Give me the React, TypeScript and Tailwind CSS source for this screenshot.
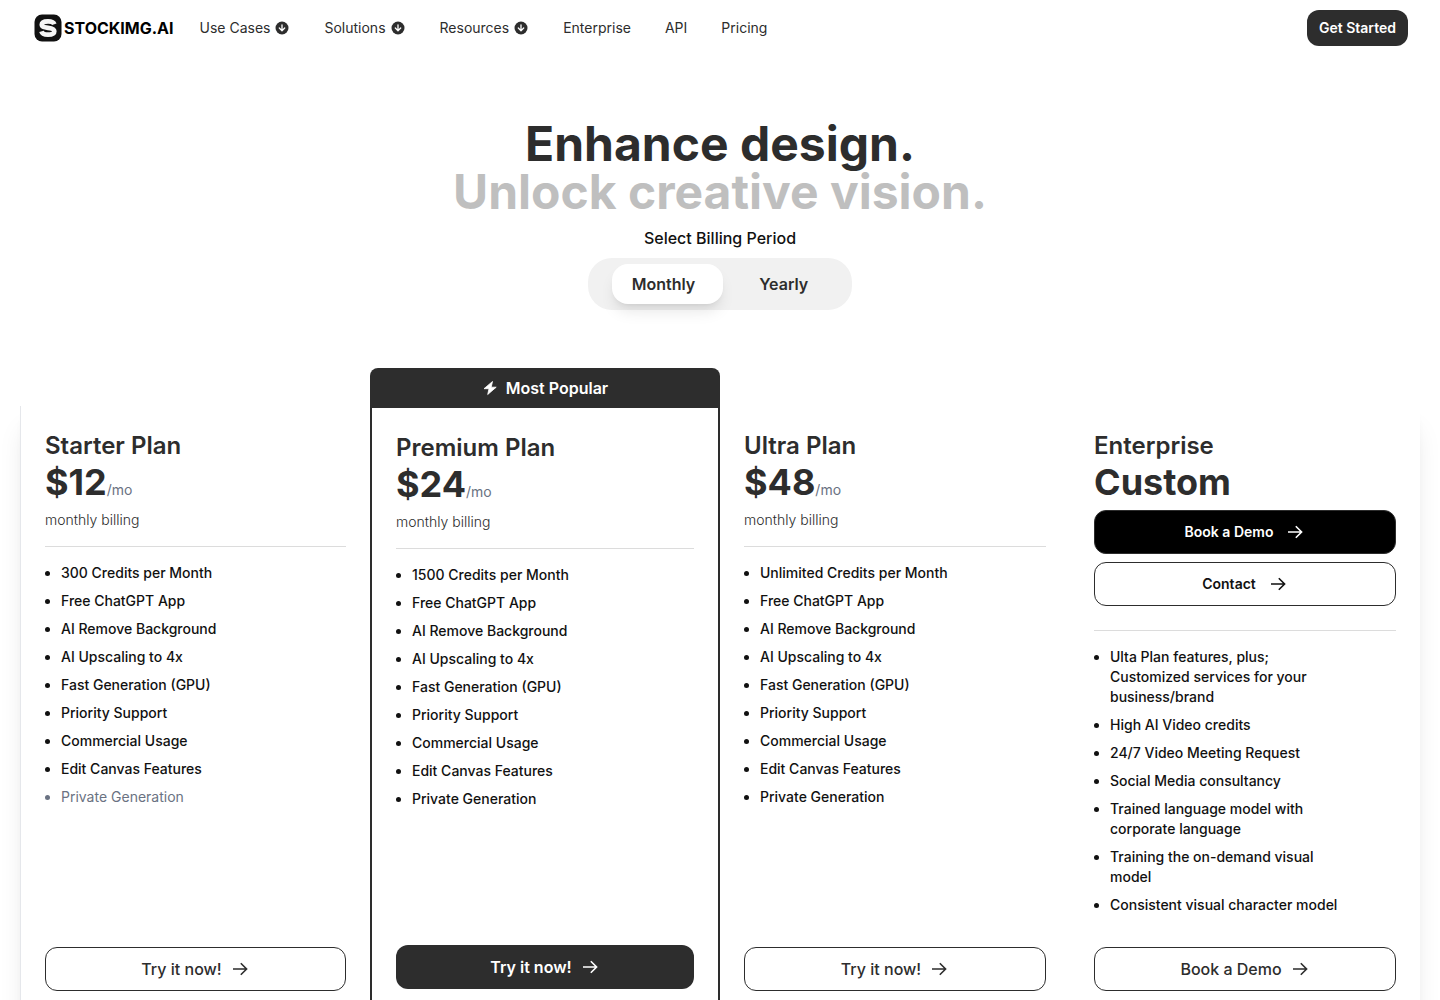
import { useState } from "react";

type Feature = {
  text: string;
  disabled?: boolean;
};

type Plan = {
  name: string;
  monthly: number;
  yearly: number;
  features: Feature[];
  popular?: boolean;
};

const navLinks = [
  { label: "Use Cases", hasMenu: true },
  { label: "Solutions", hasMenu: true },
  { label: "Resources", hasMenu: true },
  { label: "Enterprise", hasMenu: false },
  { label: "API", hasMenu: false },
  { label: "Pricing", hasMenu: false },
];

const commonFeatures: Feature[] = [
  { text: "Free ChatGPT App" },
  { text: "AI Remove Background" },
  { text: "AI Upscaling to 4x" },
  { text: "Fast Generation (GPU)" },
  { text: "Priority Support" },
  { text: "Commercial Usage" },
  { text: "Edit Canvas Features" },
];

const plans: Plan[] = [
  {
    name: "Starter Plan",
    monthly: 12,
    yearly: 9,
    features: [
      { text: "300 Credits per Month" },
      ...commonFeatures,
      { text: "Private Generation", disabled: true },
    ],
  },
  {
    name: "Premium Plan",
    monthly: 24,
    yearly: 19,
    popular: true,
    features: [
      { text: "1500 Credits per Month" },
      ...commonFeatures,
      { text: "Private Generation" },
    ],
  },
  {
    name: "Ultra Plan",
    monthly: 48,
    yearly: 39,
    features: [
      { text: "Unlimited Credits per Month" },
      ...commonFeatures,
      { text: "Private Generation" },
    ],
  },
];

const enterpriseFeatures: Feature[] = [
  { text: "Ulta Plan features, plus; Customized services for your business/brand" },
  { text: "High AI Video credits" },
  { text: "24/7 Video Meeting Request" },
  { text: "Social Media consultancy" },
  { text: "Trained language model with corporate language" },
  { text: "Training the on-demand visual model" },
  { text: "Consistent visual character model" },
];

const ArrowRight = () => (
  <svg
    viewBox="0 0 20 20"
    className="h-5 w-5"
    fill="none"
    stroke="currentColor"
    strokeWidth="1.6"
    aria-hidden="true"
  >
    <path d="M3 10h13.500M10.800 4.200 16.600 10l-5.800 5.800" />
  </svg>
);

const ArrowCircleDown = () => (
  <svg viewBox="0 0 16 16" className="h-4 w-4" aria-hidden="true">
    <circle cx="8" cy="8" r="6.500" fill="#2d2d2d" />
    <path
      d="M8 4.800v5.600M5.300 8 8 10.700 10.700 8"
      fill="none"
      stroke="#fff"
      strokeWidth="1.3"
      strokeLinecap="round"
      strokeLinejoin="round"
    />
  </svg>
);

const Bolt = () => (
  <svg viewBox="0 0 16 16" className="h-4 w-4" aria-hidden="true">
    <path
      d="M10.500 1.500 2 8.700h5L5.700 14.500 14.200 7.200h-5z"
      fill="currentColor"
      stroke="currentColor"
      strokeWidth="0.8"
      strokeLinejoin="round"
    />
  </svg>
);

const Logo = () => (
  <a href="#" className="flex items-center gap-0.5 text-black">
    <svg viewBox="0 0 28 28" className="h-7 w-7" aria-hidden="true">
      <rect x="0.5" y="0.5" width="27" height="27" rx="7.5" fill="#111" />
      <path
        d="M20.300 10.300C19.600 8.100 17 7.300 14 7.300c-3.700 0-6.200 1.200-6.200 3.300 0 2.300 2.400 2.700 6.200 3.200 4 .5 6.300 1.100 6.300 3.500 0 2.200-2.600 3.400-6.300 3.400-3.200 0-5.900-.900-6.500-3.300"
        fill="none"
        stroke="#f5f5f5"
        strokeWidth="4.700"
      />
    </svg>
    <span className="text-base leading-7 font-bold">STOCKIMG.AI</span>
  </a>
);

const Navbar = () => (
  <header className="flex h-14 items-center justify-between pr-8 pl-[34px]">
    <div className="flex items-center gap-[26px]">
      <Logo />
      <nav className="flex items-center gap-[34px] text-sm text-[#2d2d2d]">
        {navLinks.map((link) => (
          <a key={link.label} href="#" className="flex items-center gap-1">
            {link.label}
            {link.hasMenu && <ArrowCircleDown />}
          </a>
        ))}
      </nav>
    </div>
    <button className="h-9 rounded-xl bg-[#2d2d2d] px-3 text-sm font-semibold text-white">
      Get Started
    </button>
  </header>
);

const FeatureList = ({ features }: { features: Feature[] }) => (
  <ul className="flex max-w-[256px] list-disc flex-col gap-2 pl-4 text-sm font-medium text-[#111]">
    {features.map((feature) => (
      <li
        key={feature.text}
        className={feature.disabled ? "font-normal text-gray-500" : ""}
      >
        {feature.text}
      </li>
    ))}
  </ul>
);

const PlanCard = ({ plan, yearly }: { plan: Plan; yearly: boolean }) => (
  <article
    className={
      plan.popular
        ? "flex flex-col border-2 border-[#2d2d2d] p-6"
        : "flex flex-col p-6 first:border-l first:border-gray-200"
    }
  >
    <h2 className="text-2xl font-semibold text-[#2d2d2d]">{plan.name}</h2>
    <p className="text-4xl font-bold text-[#2d2d2d]">
      ${yearly ? plan.yearly : plan.monthly}
      <span className="text-sm font-normal text-gray-500">/mo</span>
    </p>
    <p className="mt-2 text-sm font-light text-[#2d2d2d]">
      {yearly ? "yearly billing" : "monthly billing"}
    </p>
    <hr className="my-4 border-[#dcdcdc]" />
    <FeatureList features={plan.features} />
    <button
      className={
        plan.popular
          ? "mt-auto flex h-11 items-center justify-center gap-2 rounded-xl bg-[#2d2d2d] font-semibold text-white"
          : "mt-auto flex h-11 items-center justify-center gap-2 rounded-xl border border-[#2d2d2d] font-medium text-[#2d2d2d]"
      }
    >
      Try it now!
      <ArrowRight />
    </button>
  </article>
);

const EnterpriseCard = () => (
  <article className="flex flex-col p-6">
    <h2 className="text-2xl font-semibold text-[#2d2d2d]">Enterprise</h2>
    <p className="text-4xl font-bold text-[#2d2d2d]">Custom</p>
    <button className="mt-2 flex h-11 items-center justify-center gap-3 rounded-xl border border-[#2d2d2d] bg-black text-sm font-semibold text-white">
      Book a Demo
      <ArrowRight />
    </button>
    <button className="mt-2 flex h-11 items-center justify-center gap-3 rounded-xl border border-[#2d2d2d] text-sm font-semibold text-[#111]">
      Contact
      <ArrowRight />
    </button>
    <hr className="mt-6 mb-4 border-[#dcdcdc]" />
    <FeatureList features={enterpriseFeatures} />
    <button className="mt-8 flex h-11 items-center justify-center gap-2 rounded-xl border border-[#2d2d2d] font-medium text-[#2d2d2d]">
      Book a Demo
      <ArrowRight />
    </button>
  </article>
);

const App = () => {
  const [yearly, setYearly] = useState(false);

  return (
    <div className="overflow-x-hidden bg-white font-[Inter,sans-serif]">
      <Navbar />
      <main>
        <section className="flex flex-col items-center pt-16">
          <h1 className="text-center text-5xl font-bold text-[#2d2d2d]">
            Enhance design.
            <span className="block text-[#bfbfbf]">Unlock creative vision.</span>
          </h1>
          <p className="mt-2.5 font-medium text-[#111]">Select Billing Period</p>
          <div className="mt-2 flex items-center rounded-3xl bg-[#f1f1f1] px-6 py-1.5 font-semibold text-[#2d2d2d]">
            <button
              onClick={() => setYearly(false)}
              className={
                yearly
                  ? "h-10 rounded-2xl pr-7 pl-5"
                  : "h-10 rounded-2xl bg-white pr-7 pl-5 shadow-lg"
              }
            >
              Monthly
            </button>
            <button
              onClick={() => setYearly(true)}
              className={
                yearly
                  ? "ml-4 h-10 rounded-2xl bg-white px-5 shadow-lg"
                  : "ml-4 h-10 rounded-2xl px-5"
              }
            >
              Yearly
            </button>
          </div>
        </section>

        <section className="px-5 pt-[58px] pb-10">
          <div className="grid grid-cols-4">
            <div className="col-start-2 flex h-10 items-center justify-center gap-2 rounded-t-lg bg-[#2d2d2d] font-semibold text-white">
              <Bolt />
              Most Popular
            </div>
          </div>
          {/* top border of the popular card tucks under its header */}
          <div className="-mt-0.5 grid grid-cols-4 shadow-xl">
            {plans.map((plan) => (
              <PlanCard key={plan.name} plan={plan} yearly={yearly} />
            ))}
            <EnterpriseCard />
          </div>
        </section>
      </main>
    </div>
  );
};

export default App;
